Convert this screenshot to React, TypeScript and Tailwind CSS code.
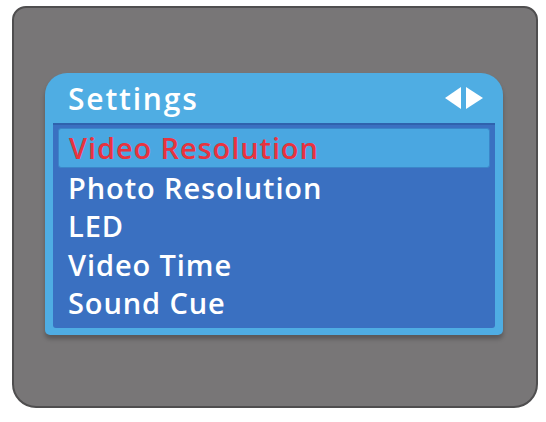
const items = ['Video Resolution', 'Photo Resolution', 'LED', 'Video Time', 'Sound Cue'];

function ArrowPair() {
  return (
    <svg width="40" height="24" viewBox="0 0 40 24" className="block">
      <polygon points="17,1 17,23 1,12" fill="#ffffff" />
      <polygon points="22,1 22,23 39,12" fill="#ffffff" />
    </svg>
  );
}

export default function App() {
  return (
    <div className="w-[546px] h-[422px] bg-white pt-[6px] pl-[12px]" style={{ fontFamily: '"Open Sans", "Liberation Sans", sans-serif' }}>
      <div className="w-[526px] h-[402px] bg-[#787677] border-2 border-[#4f4e4f] rounded-t-[14px] rounded-b-[24px] pt-[65px] pl-[31px]">
        <div className="w-[458px] h-[262px] bg-[#4fade3] rounded-t-[22px] rounded-b-[5px] shadow-[0_4px_4px_rgba(0,0,0,0.25)] px-[8px] pb-[7px] flex flex-col">
          <div className="h-[50px] flex items-center justify-between pl-[15px] pr-[11px]">
            <span className="text-white text-[30px] font-[550] leading-none tracking-[1.8px] pt-[2px]">Settings</span>
            <ArrowPair />
          </div>
          <div className="flex-1 bg-[#3a70c1] border-t-2 border-[#2f62ad] rounded-b-[3px] pt-[3px] px-[5px]">
            {items.map((label, i) => (
              <div
                key={label}
                className={
                  i === 0
                    ? 'h-[40px] flex items-center pl-[10px] bg-[#4aa7e1] rounded-[3px] border border-[#3b86c9] text-[#e8333f] text-[29px] font-[550] tracking-[0.9px]'
                    : 'h-[38.5px] flex items-center pl-[10px] text-white text-[29px] font-[550] tracking-[0.9px]'
                }
              >
                {label}
              </div>
            ))}
          </div>
        </div>
      </div>
    </div>
  );
}
